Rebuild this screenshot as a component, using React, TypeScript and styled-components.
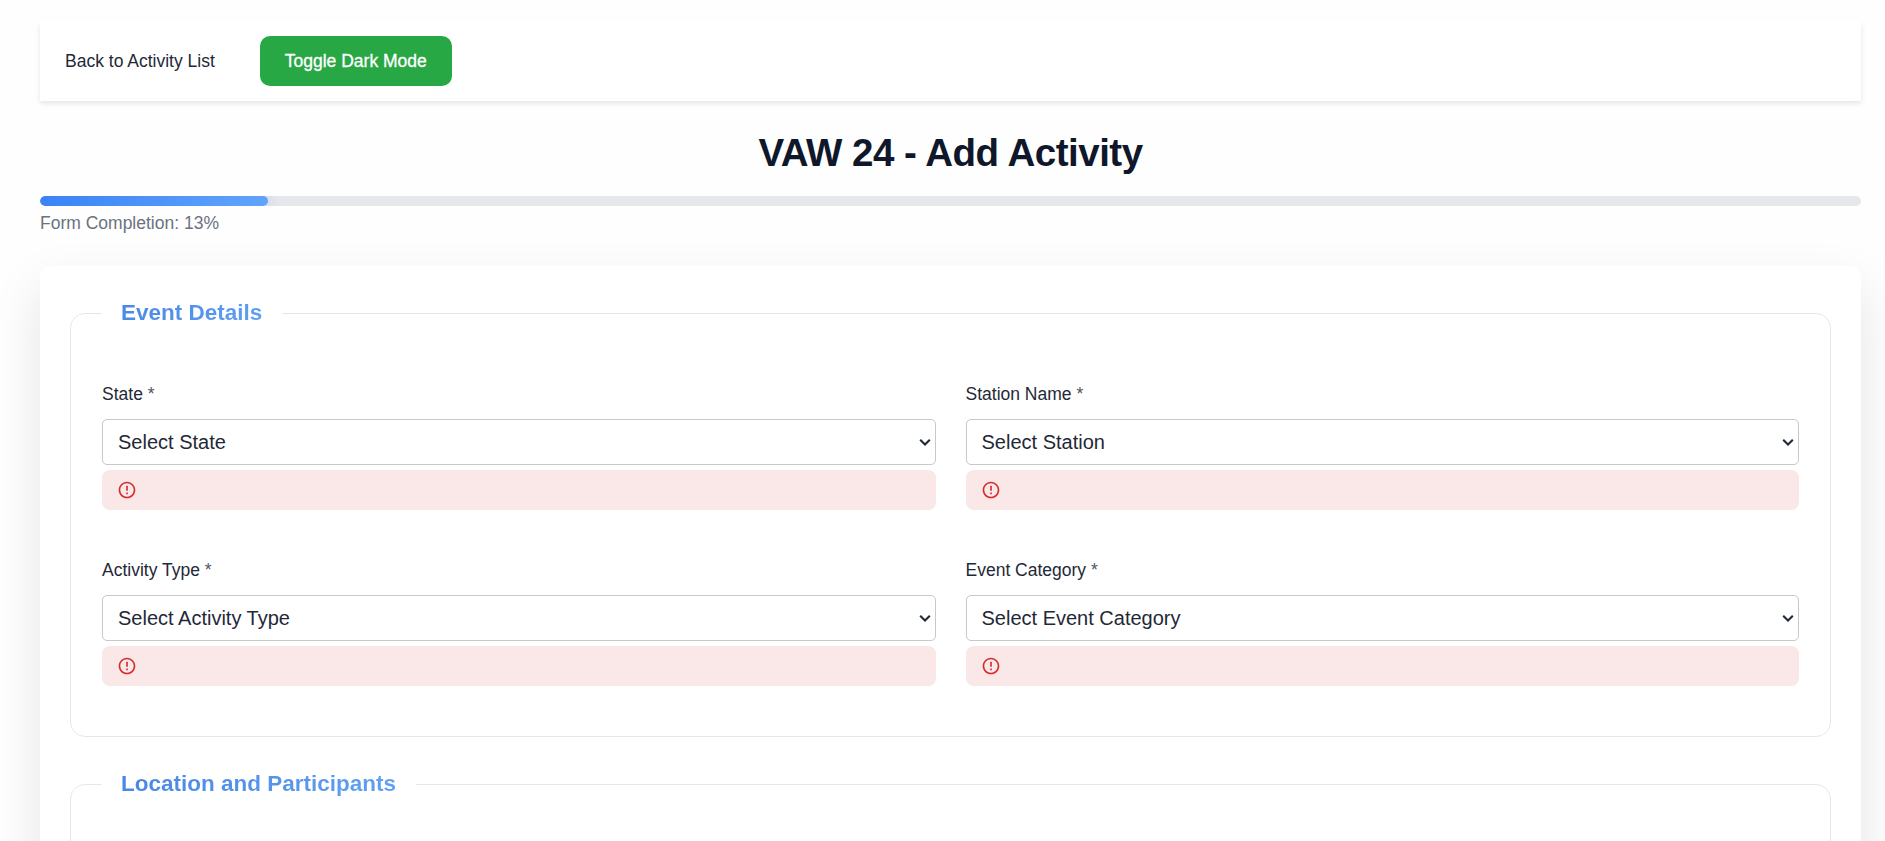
import React from "react";
import styled, { createGlobalStyle } from "styled-components";

const GlobalStyle = createGlobalStyle`
  * { box-sizing: border-box; }
  html { overflow: hidden; }
  body {
    margin: 0;
    height: 841px;
    overflow: hidden;
    background: #fefefe;
    color: #1f2937;
    font-family: "Liberation Sans", Arial, sans-serif;
    font-size: 17.5px;
  }
`;

const Page = styled.main`
  height: 841px;
  overflow: hidden;
  padding: 21px 24px 0 40px;
`;

const NavBar = styled.nav`
  display: flex;
  align-items: center;
  gap: 20px;
  height: 80px;
  background: #fff;
  box-shadow: 0 2.5px 5px rgba(0, 0, 0, 0.1);
`;

const NavButton = styled.button<{ $filled?: boolean }>`
  height: 50px;
  padding: 0 25px;
  border: 0;
  border-radius: 10px;
  font: inherit;
  font-weight: 400;
  background: ${(p) => (p.$filled ? "#28a745" : "transparent")};
  color: ${(p) => (p.$filled ? "#fff" : "#1f2937")};
  -webkit-text-stroke: ${(p) => (p.$filled ? "0.3px #fff" : "0")};
`;

const Title = styled.h1`
  margin: 28px 0 19px;
  text-align: center;
  font-size: 38.5px;
  letter-spacing: -0.48px;
  line-height: 48px;
  font-weight: 700;
  color: #0f172a;
`;

const Track = styled.div`
  height: 10px;
  border-radius: 5px;
  background: #e5e7eb;
  overflow: hidden;
`;

const Fill = styled.div`
  height: 100%;
  border-radius: 5px;
  background: linear-gradient(135deg, #3b82f6, #60a5fa);
  box-shadow: 0 0 12px rgba(59, 130, 246, 0.3);
`;

const ProgressText = styled.p`
  margin: 5px 0 30px;
  line-height: 25px;
  color: #6b7280;
`;

const Card = styled.form`
  padding: 30px;
  height: 900px;
  border-radius: 10px;
  background: #fff;
  box-shadow: 0 20px 50px rgba(0, 0, 0, 0.1);
`;

const Section = styled.fieldset`
  min-width: 0;
  margin: 0 0 30px;
  padding: 48px 31px 50px;
  border: 1px solid #e5e7eb;
  border-radius: 15px;
`;

const Legend = styled.legend`
  padding: 0 19.5px 2px 19px;
  font-size: 22.5px;
  line-height: 33px;
  font-weight: 700;
  background: linear-gradient(135deg, #4583e4, #64a4f4);
  background-clip: text;
  -webkit-background-clip: text;
  color: transparent;
`;

const Fields = styled.div`
  display: grid;
  grid-template-columns: 1fr 1fr;
  gap: 45px 30px;
`;

const Label = styled.label`
  display: block;
  height: 40px;
  line-height: 30px;
`;

const Required = styled.span`
  color: #4b5563;
`;

const SelectWrap = styled.div`
  position: relative;
`;

const Select = styled.select`
  display: block;
  appearance: none;
  width: 100%;
  height: 46px;
  padding: 0 15px;
  border: 1px solid #c5c8cd;
  border-radius: 5px;
  background: #fff;
  color: #1f2937;
  font: inherit;
  font-size: 20px;
`;

const Chevron = styled.svg`
  position: absolute;
  right: 5px;
  top: 19px;
  pointer-events: none;
`;

const ErrorBox = styled.div`
  display: flex;
  align-items: center;
  height: 40px;
  margin-top: 5px;
  padding: 0 15px;
  border-radius: 7.5px;
  background: #fae8e8;
`;

function AlertIcon() {
  return (
    <svg width="20" height="20" viewBox="0 0 24 24" fill="#d32f2f">
      <path d="M11 15h2v2h-2zm0-8h2v6h-2zm.99-5C6.47 2 2 6.48 2 12s4.47 10 9.99 10C17.52 22 22 17.52 22 12S17.52 2 11.99 2zM12 20c-4.42 0-8-3.58-8-8s3.58-8 8-8 8 3.58 8 8-3.58 8-8 8z" />
    </svg>
  );
}

function SelectField({ label, placeholder }: { label: string; placeholder: string }) {
  return (
    <div>
      <Label>
        {label} <Required>*</Required>
      </Label>
      <SelectWrap>
        <Select aria-label={label}>
          <option>{placeholder}</option>
        </Select>
        <Chevron width="12" height="9" viewBox="0 0 12 9" fill="none">
          <path d="M1.2 1.8 6 6.5l4.8-4.7" stroke="#1f2937" strokeWidth="2.1" />
        </Chevron>
      </SelectWrap>
      <ErrorBox>
        <AlertIcon />
      </ErrorBox>
    </div>
  );
}

const eventFields = [
  { label: "State", placeholder: "Select State" },
  { label: "Station Name", placeholder: "Select Station" },
  { label: "Activity Type", placeholder: "Select Activity Type" },
  { label: "Event Category", placeholder: "Select Event Category" },
];

export default function App() {
  const completion = 12.5;
  return (
    <Page>
      <GlobalStyle />
      <NavBar>
        <NavButton>Back to Activity List</NavButton>
        <NavButton $filled>Toggle Dark Mode</NavButton>
      </NavBar>
      <Title>VAW 24 - Add Activity</Title>
      <Track>
        <Fill style={{ width: `${completion}%` }} />
      </Track>
      <ProgressText>Form Completion: {Math.round(completion)}%</ProgressText>
      <Card>
        <Section>
          <Legend>Event Details</Legend>
          <Fields>
            {eventFields.map((f) => (
              <SelectField key={f.label} {...f} />
            ))}
          </Fields>
        </Section>
        <Section>
          <Legend>Location and Participants</Legend>
        </Section>
      </Card>
    </Page>
  );
}
